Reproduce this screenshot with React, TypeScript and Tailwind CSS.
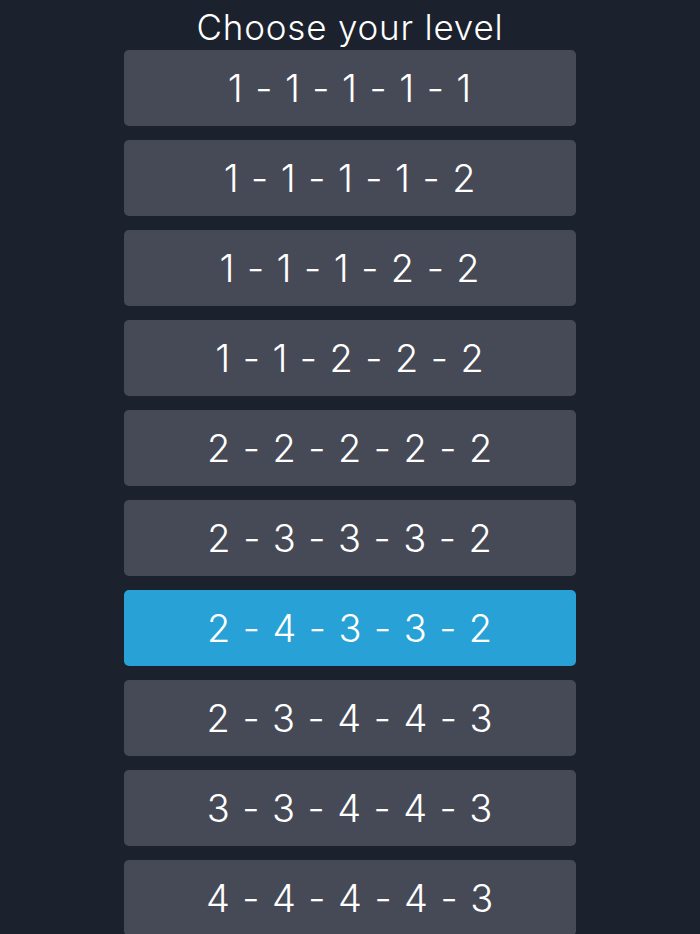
const levels = [
  '1 - 1 - 1 - 1 - 1',
  '1 - 1 - 1 - 1 - 2',
  '1 - 1 - 1 - 2 - 2',
  '1 - 1 - 2 - 2 - 2',
  '2 - 2 - 2 - 2 - 2',
  '2 - 3 - 3 - 3 - 2',
  '2 - 4 - 3 - 3 - 2',
  '2 - 3 - 4 - 4 - 3',
  '3 - 3 - 4 - 4 - 3',
  '4 - 4 - 4 - 4 - 3',
]

export default function App() {
  const selected = 6

  return (
    <div className="h-[934px] overflow-hidden bg-[#1b222d] text-white font-['Inter',sans-serif] font-light">
      <h1 className="h-[50px] pt-[4px] flex items-center justify-center text-[35px] leading-none tracking-[0.8px]">
        Choose your level
      </h1>
      <div className="flex flex-col items-center gap-[14px]">
        {levels.map((level, i) => (
          <button
            key={i}
            className={
              'w-[452px] h-[76px] shrink-0 rounded-[5px] flex items-center justify-center text-[38px] leading-none tracking-[0.9px] ' +
              (i === selected ? 'bg-[#27a1d6]' : 'bg-[#464a56]')
            }
          >
            {level}
          </button>
        ))}
      </div>
    </div>
  )
}
